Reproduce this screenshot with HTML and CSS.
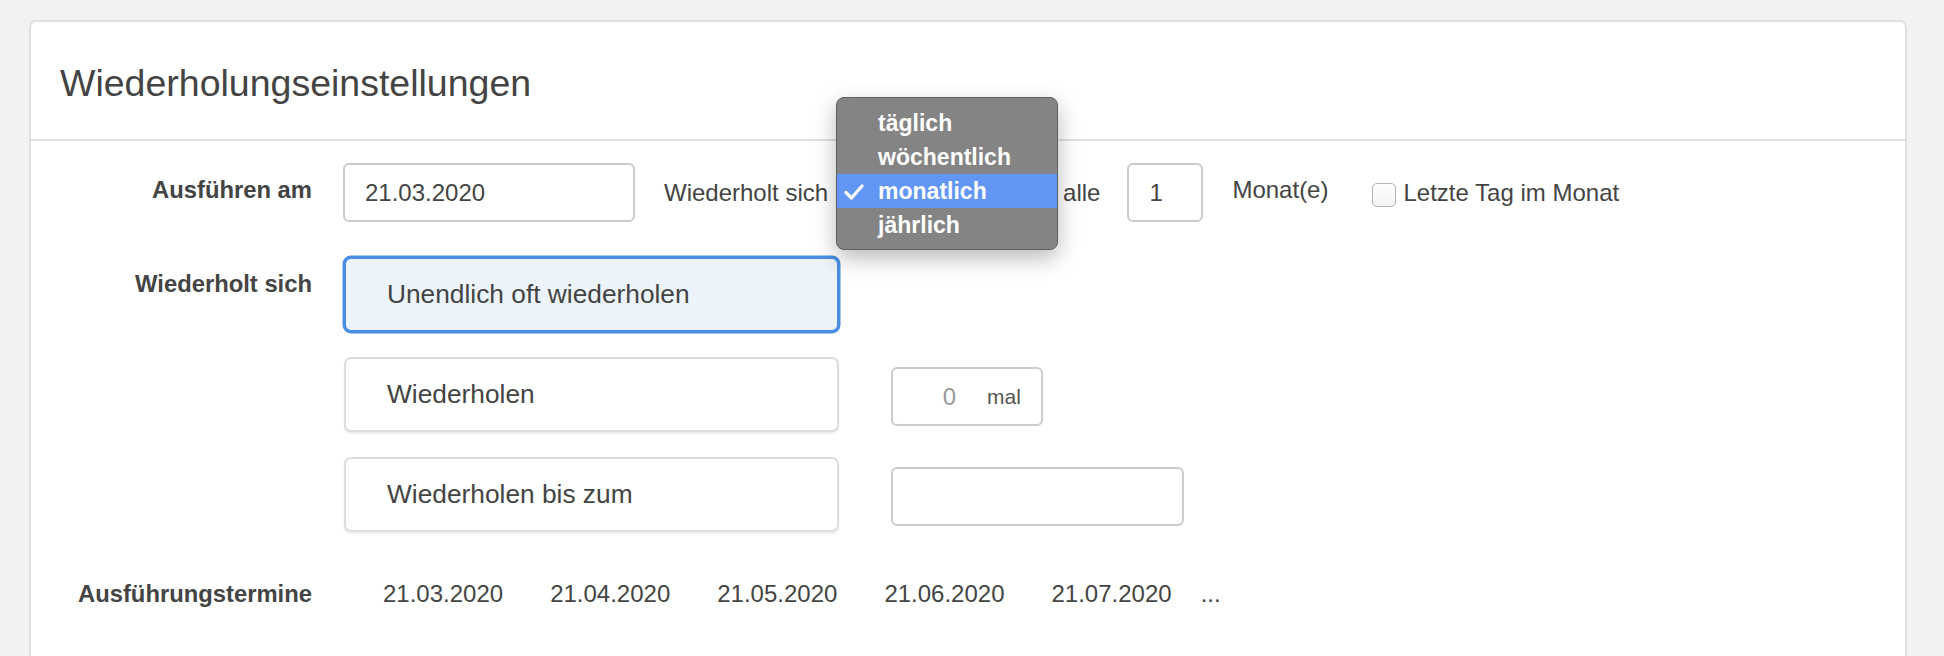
FILE: index.html
```html
<!DOCTYPE html>
<html>
<head>
    <meta charset="utf-8">
    <title>Wiederholungseinstellungen</title>
    <link rel="stylesheet" href="styles.css">
</head>
<body>
    <div class="panel">
        <div class="panel-heading">
            <h3>Wiederholungseinstellungen</h3>
        </div>
        <div class="panel-body">
            <div class="form-row">
                <label class="row-label" for="start-date">Ausführen am</label>
                <div class="row-controls">
                    <input type="text" id="start-date" class="text-field date-field" value="21.03.2020">
                    <span class="inline-text repeat-text">Wiederholt sich</span>
                    <div class="interval-select">
                        <ul class="select-menu">
                            <li>täglich</li>
                            <li>wöchentlich</li>
                            <li class="selected">
                                <svg class="check" width="20" height="16" viewBox="0 0 20 16">
                                    <polyline points="2,8.5 7.5,14 18,2" fill="none" stroke="#fff" stroke-width="3.2" stroke-linecap="round" stroke-linejoin="round"/>
                                </svg>monatlich
                            </li>
                            <li>jährlich</li>
                        </ul>
                    </div>
                    <span class="inline-text every-text">alle</span>
                    <input type="text" class="text-field every-field" value="1">
                    <span class="inline-text unit-text">Monat(e)</span>
                    <label class="last-day"><input type="checkbox">Letzte Tag im Monat</label>
                </div>
            </div>

            <div class="form-row">
                <div class="row-label">Wiederholt sich</div>
                <div class="repeat-options">
                    <div class="repeat-option">
                        <div class="option-box active">Unendlich oft wiederholen</div>
                    </div>
                    <div class="repeat-option">
                        <div class="option-box">Wiederholen</div>
                        <div class="count-field">
                            <input type="text" class="count-input" value="0">
                            <span class="count-unit">mal</span>
                        </div>
                    </div>
                    <div class="repeat-option">
                        <div class="option-box">Wiederholen bis zum</div>
                        <input type="text" class="text-field until-field" value="">
                    </div>
                </div>
            </div>

            <div class="form-row">
                <div class="row-label">Ausführungstermine</div>
                <div class="run-dates">
                    <span>21.03.2020</span>
                    <span>21.04.2020</span>
                    <span>21.05.2020</span>
                    <span>21.06.2020</span>
                    <span>21.07.2020</span>
                    <span class="run-more">...</span>
                </div>
            </div>
        </div>
    </div>
</body>
</html>
```

FILE: styles.css
```css
html {
    overflow: hidden;
}

body {
    margin: 20px 37px 0 29px;
    background: #f2f2f2;
    font-family: "Liberation Sans", Arial, Helvetica, sans-serif;
    font-size: 24px;
    color: #444;
}

.panel {
    min-height: 700px;
    background: #fff;
    border: 2px solid #e0e0e0;
    border-radius: 7px;
}

.panel-heading {
    padding: 41px 29px 35px;
    border-bottom: 2px solid #e0e0e0;
}

.panel-heading h3 {
    margin: 0;
    font-size: 37.5px;
    font-weight: normal;
    line-height: 41px;
}

.panel-body {
    padding-top: 22px;
}

.form-row {
    display: grid;
    grid-template-columns: 281px 1fr;
    column-gap: 31px;
    margin-bottom: 35px;
}

.row-label {
    padding-top: 10px;
    line-height: 34px;
    font-size: 23.8px;
    font-weight: bold;
    text-align: right;
}

.row-controls {
    display: flex;
    align-items: center;
    height: 59px;
}

.inline-text {
    line-height: 34px;
    white-space: nowrap;
}

.text-field {
    box-sizing: border-box;
    height: 59px;
    padding: 0 20px;
    border: 2px solid #ccc;
    border-radius: 6px;
    font-family: inherit;
    font-size: 24px;
    color: #444;
    background: #fff;
}

.date-field {
    width: 292px;
}

.repeat-text {
    margin-left: 29px;
}

.interval-select {
    position: relative;
    width: 213px;
    height: 59px;
    margin-left: 7px;
}

/* open popup list of the interval select */
.select-menu {
    position: absolute;
    top: -66px;
    left: 1px;
    width: 220px;
    margin: 0;
    padding: 8px 0 7px;
    list-style: none;
    background: #848484;
    border: 1px solid #5f5f5f;
    border-radius: 8px;
    box-shadow: 0 8px 22px rgba(0, 0, 0, 0.28);
    z-index: 10;
}

.select-menu li {
    position: relative;
    height: 34px;
    padding-left: 41px;
    line-height: 34px;
    font-size: 23px;
    font-weight: bold;
    color: #fff;
}

.select-menu li.selected {
    background: #6196f4;
}

.select-menu .check {
    position: absolute;
    left: 7px;
    top: 10px;
}

.every-text {
    margin-left: 15px;
}

.every-field {
    width: 76px;
    margin-left: 27px;
}

.unit-text {
    margin-left: 29px;
    margin-bottom: 6px;
}

.last-day {
    display: flex;
    align-items: center;
    margin-left: 44px;
    white-space: nowrap;
}

.last-day input {
    appearance: none;
    -webkit-appearance: none;
    width: 24px;
    height: 24px;
    margin: 5px 7px 0 0;
    border: 1.5px solid #b3b3b3;
    border-radius: 5px;
    background: linear-gradient(#fff, #f3f3f3);
}

.repeat-options {
    display: flex;
    flex-direction: column;
    gap: 25px;
}

.repeat-option {
    display: flex;
    align-items: flex-start;
}

.option-box {
    box-sizing: border-box;
    display: flex;
    align-items: center;
    width: 495px;
    height: 75px;
    margin-left: 1px;
    padding-left: 41px;
    border: 2px solid #ddd;
    border-radius: 7px;
    box-shadow: 0 2px 2px rgba(0, 0, 0, 0.07);
    font-size: 26.3px;
    background: #fff;
}

.option-box.active {
    border-color: #4a8ee4;
    background: #edf3fb;
    box-shadow: 0 0 0 1.5px #4a8ee4;
}

.count-field {
    box-sizing: border-box;
    display: flex;
    align-items: center;
    width: 152px;
    height: 59px;
    margin: 10px 0 0 52px;
    border: 2px solid #ccc;
    border-radius: 6px;
}

.count-input {
    box-sizing: border-box;
    width: 75px;
    padding: 0 12px 0 0;
    border: none;
    background: transparent;
    text-align: right;
    font-family: inherit;
    font-size: 24px;
    color: #999;
}

.count-unit {
    padding: 0 19px 0 19px;
    font-size: 21px;
    color: #555;
}

.until-field {
    width: 293px;
    margin: 10px 0 0 52px;
}

.run-dates {
    display: flex;
    gap: 47px;
    padding: 10px 0 0 40px;
    line-height: 34px;
}

.run-dates .run-more {
    margin-left: -18px;
}
```
